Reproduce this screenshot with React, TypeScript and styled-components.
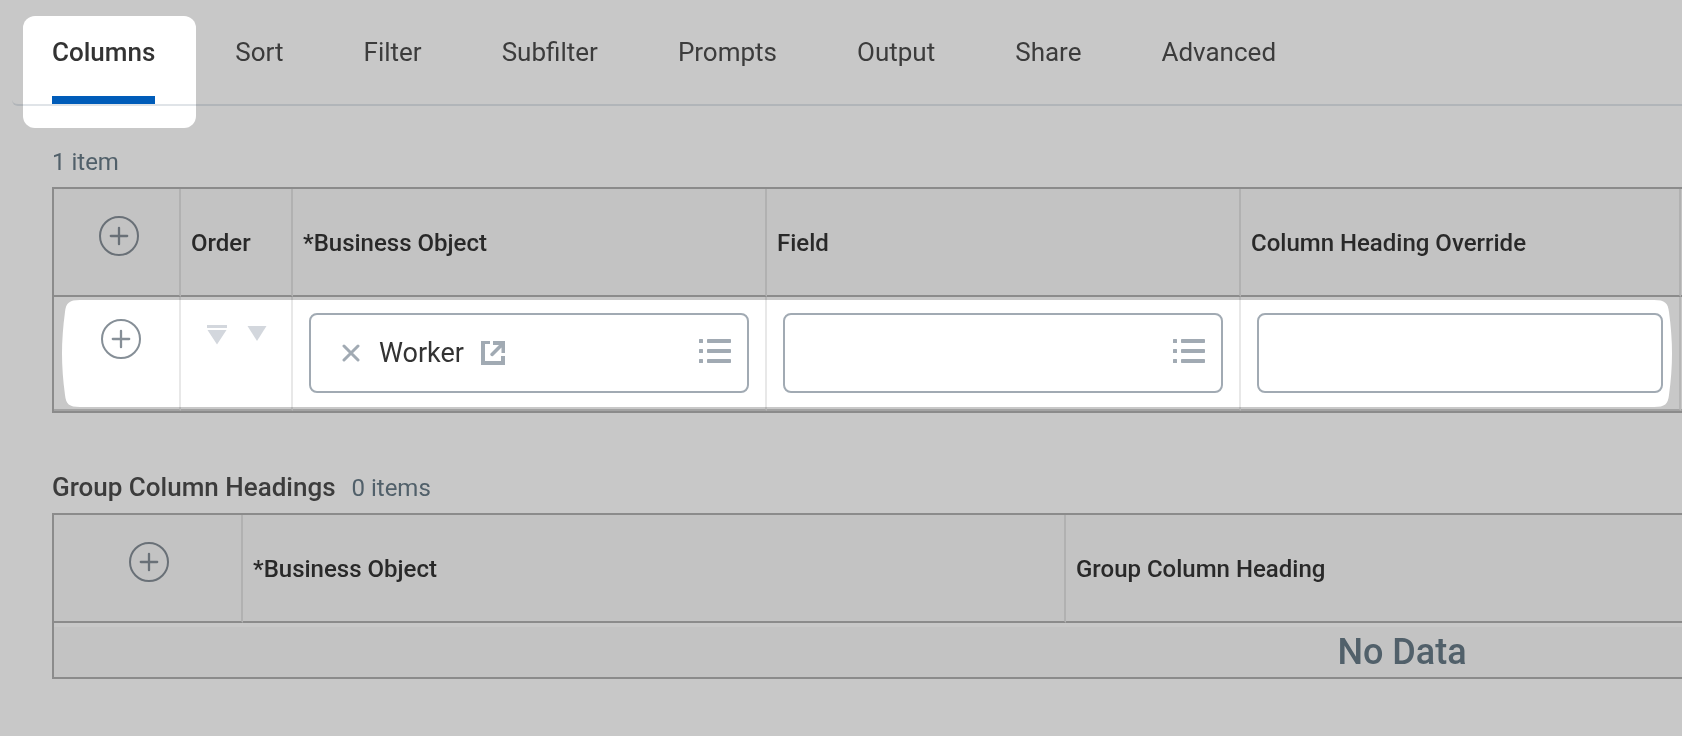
import React from "react";
import styled, { createGlobalStyle } from "styled-components";

const color = {
  page: "#c8c8c8",
  header: "#c3c3c3",
  frame: "#8b8b8b",
  text: "#3c3c3c",
  textStrong: "#292929",
  textActive: "#333333",
  muted: "#51606a",
  control: "#a1aab3",
  accent: "#005cb9",
  columnLine: "rgba(0, 0, 0, 0.09)",
};

const GlobalStyle = createGlobalStyle`
  *, *::before, *::after { box-sizing: border-box; }
  html { background: ${color.page}; }
  body {
    margin: 0;
    font-family: Roboto, "Liberation Sans", sans-serif;
    color: ${color.text};
  }
  button, input { font: inherit; color: inherit; }
`;

const Page = styled.div`
  isolation: isolate;
  min-height: 100vh;
  overflow-x: hidden;
`;

const TabBar = styled.nav`
  display: flex;
  gap: 80px;
  margin-left: 12px;
  padding-left: 40px;
  border-bottom: 2px solid rgba(44, 76, 100, 0.15);
  border-bottom-left-radius: 6px;
`;

const Tab = styled.button<{ $active?: boolean }>`
  position: relative;
  padding: 36px 0 28px;
  border: 0;
  border-bottom: 8px solid ${(p) => (p.$active ? color.accent : "transparent")};
  background: none;
  font-size: 26px;
  line-height: 32px;
  font-weight: ${(p) => (p.$active ? 500 : 400)};
  color: ${(p) => (p.$active ? color.textActive : color.text)};
  cursor: pointer;
`;

const TabSpotlight = styled.span`
  position: absolute;
  z-index: -1;
  inset: 16px -41px -32px -29px;
  border-radius: 12px;
  background: #fff;
`;

const Section = styled.section`
  padding: 41px 0 0 52px;
`;

const GroupSection = styled(Section)`
  padding-top: 58px;
`;

const SectionHead = styled.header`
  display: flex;
  align-items: baseline;
  gap: 16px;
  margin-bottom: 10px;
`;

const Title = styled.h2`
  margin: 0;
  font-size: 26px;
  line-height: 32px;
  font-weight: 500;
`;

const Count = styled.span`
  font-size: 24px;
  line-height: 30px;
  color: ${color.muted};
`;

const Scroller = styled.div`
  overflow-x: auto;
  scrollbar-width: none;
`;

const Grid = styled.table`
  width: 2700px;
  table-layout: fixed;
  border: 2px solid ${color.frame};
  border-collapse: separate;
  border-spacing: 0;
`;

const Col = styled.col<{ $w?: number }>`
  width: ${(p) => (p.$w ? `${p.$w}px` : "auto")};
`;

const HeadCell = styled.th`
  height: 108px;
  padding: 2px 10px 0;
  border-right: 2px solid ${color.columnLine};
  border-bottom: 2px solid ${color.frame};
  background: ${color.header};
  font-size: 24px;
  line-height: 28px;
  font-weight: 500;
  text-align: left;
  color: ${color.textStrong};
`;

const HeadAction = styled(HeadCell)<{ $left: number }>`
  padding: 27px 0 0 ${(p) => p.$left}px;
  vertical-align: top;
`;

const BodyRow = styled.tr`
  position: relative;
`;

const Cell = styled.td`
  height: 114px;
  padding: 16px;
  border-right: 2px solid ${color.columnLine};
  border-bottom: 2px solid #a3a3a3;
  vertical-align: top;
`;

const ActionCell = styled(Cell)`
  padding: 22px 0 0 47px;
`;

const OrderCell = styled(Cell)`
  padding: 28px 24px 0 26px;
`;

const RowSpotlight = styled.svg`
  position: absolute;
  z-index: -1;
  top: 3px;
  left: 8px;
  display: block;
`;

const EmptyCell = styled.td`
  height: 54px;
  padding: 0;
  border-top: 4px solid ${color.page};
  background: ${color.header};
  font-size: 36px;
  line-height: 42px;
  font-weight: 500;
  text-align: center;
  color: ${color.muted};
`;

const IconButton = styled.button`
  display: block;
  flex: none;
  padding: 0;
  border: 0;
  background: none;
  line-height: 0;
  cursor: pointer;
`;

const OrderButtons = styled.div`
  display: flex;
  gap: 20px;
`;

const Field = styled.div`
  display: flex;
  align-items: center;
  height: 80px;
  padding: 0 16px 0 31px;
  border: 2px solid ${color.control};
  border-radius: 8px;
  background: #fff;
`;

const Chip = styled.span`
  display: flex;
  align-items: center;
  gap: 17px;
  flex: none;
  font-size: 27px;
  line-height: 32px;
  color: #333;
`;

const ChipLabel = styled.span`
  padding-left: 2px;
`;

const IconLink = styled.a`
  display: block;
  line-height: 0;
`;

const BareInput = styled.input`
  flex: 1;
  min-width: 0;
  height: 100%;
  padding: 0;
  border: 0;
  outline: 0;
  background: transparent;
  font-size: 26px;
`;

const TextInput = styled.input`
  display: block;
  width: 100%;
  height: 80px;
  padding: 0 16px;
  border: 2px solid ${color.control};
  border-radius: 8px;
  outline: 0;
  background: #fff;
  font-size: 26px;
`;

function AddButton({ label, stroke = "#697077" }: { label: string; stroke?: string }) {
  return (
    <IconButton type="button" aria-label={label}>
      <svg width="40" height="40" viewBox="0 0 40 40" fill="none" stroke={stroke} strokeWidth="2">
        <circle cx="20" cy="20" r="19" />
        <path d="M20 11.800V28.200M11.800 20H28.200" strokeWidth="2.300" strokeLinecap="round" />
      </svg>
    </IconButton>
  );
}

function ListButton({ label }: { label: string }) {
  return (
    <IconButton type="button" aria-label={label}>
      <svg width="32" height="28" viewBox="0 0 32 28" fill={color.control}>
        {[0, 10, 20].map((y) => (
          <React.Fragment key={y}>
            <rect x="0" y={y} width="4" height="4" rx="0.5" />
            <rect x="8" y={y} width="24" height="4" rx="0.8" />
          </React.Fragment>
        ))}
      </svg>
    </IconButton>
  );
}

const tabs = ["Columns", "Sort", "Filter", "Subfilter", "Prompts", "Output", "Share", "Advanced"];

export default function App() {
  return (
    <Page>
      <GlobalStyle />
      <TabBar aria-label="Report definition">
        {tabs.map((name, i) => (
          <Tab key={name} type="button" $active={i === 0} aria-current={i === 0 ? "page" : undefined}>
            {i === 0 && <TabSpotlight />}
            {name}
          </Tab>
        ))}
      </TabBar>

      <main>
        <Section>
          <SectionHead>
            <Count>1 item</Count>
          </SectionHead>
          <Scroller>
            <Grid aria-label="Columns">
              <colgroup>
                <Col $w={127} />
                <Col $w={112} />
                <Col $w={474} />
                <Col $w={474} />
                <Col $w={440} />
                <Col />
              </colgroup>
              <thead>
                <tr>
                  <HeadAction $left={45}>
                    <AddButton label="Add row at top" />
                  </HeadAction>
                  <HeadCell scope="col">Order</HeadCell>
                  <HeadCell scope="col">*Business Object</HeadCell>
                  <HeadCell scope="col">Field</HeadCell>
                  <HeadCell scope="col">Column Heading Override</HeadCell>
                  <HeadCell as="td" />
                </tr>
              </thead>
              <tbody>
                <BodyRow>
                  <ActionCell>
                    <RowSpotlight width="1610" height="107" viewBox="0 0 1610 107" fill="#fff" aria-hidden="true">
                      <path d="M18 0H1592C1603 0 1606 3 1607 12Q1610 34 1610 53.500T1607 95C1606 104 1603 107 1592 107H18C7 107 4 104 3 95Q0 73 0 53.500T3 12C4 3 7 0 18 0Z" />
                    </RowSpotlight>
                    <AddButton label="Add row" stroke="#868f97" />
                  </ActionCell>
                  <OrderCell>
                    <OrderButtons>
                      <IconButton type="button" aria-label="Move to bottom">
                        <svg width="20" height="20" viewBox="0 0 20 20" fill="#d3d7dd">
                          <path d="M0 0H20V3H0ZM0.500 5H19.500L10 19.500Z" />
                        </svg>
                      </IconButton>
                      <IconButton type="button" aria-label="Move down">
                        <svg width="20" height="20" viewBox="0 0 20 20" fill="#d3d7dd">
                          <path d="M0.500 1H19.500L10 16Z" />
                        </svg>
                      </IconButton>
                    </OrderButtons>
                  </OrderCell>
                  <Cell>
                    <Field>
                      <Chip>
                        <IconButton type="button" aria-label="Remove Worker">
                          <svg width="18" height="18" viewBox="0 0 18 18" fill="none" stroke={color.control} strokeWidth="3" strokeLinecap="round">
                            <path d="M2 2L16 16M16 2L2 16" />
                          </svg>
                        </IconButton>
                        <ChipLabel>Worker</ChipLabel>
                        <IconLink href="#worker" aria-label="Open Worker">
                          <svg width="24" height="24" viewBox="0 0 24 24" fill={color.control}>
                            <path d="M0 0H9V3H4V20H20V15H24V24H0Z" />
                            <path d="M12 0H24V12H20.500V6.500L12 15C10.500 16 8.500 14 9.500 12.500L18 4H12Z" />
                          </svg>
                        </IconLink>
                      </Chip>
                      <BareInput type="text" aria-label="Business Object" />
                      <ListButton label="Browse business objects" />
                    </Field>
                  </Cell>
                  <Cell>
                    <Field>
                      <BareInput type="text" aria-label="Field" />
                      <ListButton label="Browse fields" />
                    </Field>
                  </Cell>
                  <Cell>
                    <TextInput type="text" aria-label="Column Heading Override" />
                  </Cell>
                  <Cell />
                </BodyRow>
              </tbody>
            </Grid>
          </Scroller>
        </Section>

        <GroupSection>
          <SectionHead>
            <Title>Group Column Headings</Title>
            <Count>0 items</Count>
          </SectionHead>
          <Scroller>
            <Grid aria-label="Group Column Headings">
              <colgroup>
                <Col $w={189} />
                <Col $w={823} />
                <Col />
              </colgroup>
              <thead>
                <tr>
                  <HeadAction $left={75}>
                    <AddButton label="Add group heading" />
                  </HeadAction>
                  <HeadCell scope="col">*Business Object</HeadCell>
                  <HeadCell scope="col">Group Column Heading</HeadCell>
                </tr>
              </thead>
              <tbody>
                <tr>
                  <EmptyCell colSpan={3}>No Data</EmptyCell>
                </tr>
              </tbody>
            </Grid>
          </Scroller>
        </GroupSection>
      </main>
    </Page>
  );
}
